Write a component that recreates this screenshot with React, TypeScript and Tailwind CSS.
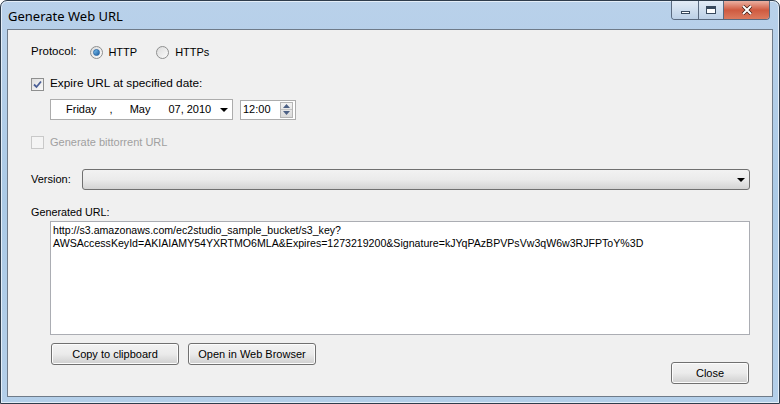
import React from "react";

const font = { fontFamily: '"Liberation Sans", Arial, sans-serif' };

const Radio = ({ checked }: { checked?: boolean }) => (
  <span className="flex h-[13px] w-[13px] items-center justify-center rounded-full border border-[#8e8f8f] bg-gradient-to-br from-[#dcdcdc] to-[#fbfbfb]">
    {checked && <span className="h-[7px] w-[7px] rounded-full bg-gradient-to-br from-[#7cc4f3] to-[#1f5f9f] border border-[#2a6aa9]" />}
  </span>
);

const Check = ({ checked, disabled }: { checked?: boolean; disabled?: boolean }) => (
  <span
    className={`flex h-[13px] w-[13px] items-center justify-center border ${
      disabled ? "border-[#c9c9c9] bg-[#f4f4f4]" : "border-[#8e8f8f] bg-gradient-to-br from-[#dedede] to-[#fafafa]"
    }`}
  >
    {checked && (
      <svg width="9" height="9" viewBox="0 0 9 9">
        <path d="M1 4.5 L3.5 7 L8 1.5" stroke="#4a5f97" strokeWidth="1.8" fill="none" />
      </svg>
    )}
  </span>
);

const Button = ({ label, className }: { label: string; className?: string }) => (
  <div
    className={`flex h-[22px] items-center justify-center rounded-[3px] border border-[#707070] bg-gradient-to-b from-[#f2f2f2] via-[#ebebeb] to-[#cfcfcf] text-[11px] text-black shadow-[inset_0_0_0_1px_#fcfcfc] ${className ?? ""}`}
  >
    {label}
  </div>
);

const DownArrow = () => (
  <svg width="8" height="4" viewBox="0 0 8 4">
    <path d="M0 0 H8 L4 4 Z" fill="#000" />
  </svg>
);

export default function App() {
  return (
    <div className="relative flex h-[404px] w-[780px] flex-col overflow-hidden rounded-t-[7px] border border-[#2f3d4c] bg-gradient-to-b from-[#b9d1ea] via-[#abcae6] to-[#b4cfe9] shadow-[inset_0_0_0_1px_#e4eef8]" style={font}>
      <div className="flex h-[28px] shrink-0 items-start justify-between">
        <span className="mt-[6px] pl-[7px] text-[13px] text-black" style={{ fontFamily: '"Noto Sans", "Open Sans", sans-serif' }}>
          Generate Web URL
        </span>
        <div className="mr-[9px] flex h-[19px] overflow-hidden rounded-b-[4px] border border-t-0 border-[#5a6a7f]">
          <div className="flex w-[27px] items-center justify-center border-r border-[#5a6a7f] bg-gradient-to-b from-[#e3ecf6] to-[#bcd0e6]">
            <span className="mt-[4px] h-[3px] w-[9px] border border-[#38495d] bg-white" />
          </div>
          <div className="flex w-[25px] items-center justify-center border-r border-[#5a6a7f] bg-gradient-to-b from-[#e3ecf6] to-[#bcd0e6]">
            <span className="h-[8px] w-[10px] border border-[#38495d] border-t-[3px] bg-white" />
          </div>
          <div className="flex w-[45px] items-center justify-center bg-gradient-to-b from-[#eab0a2] via-[#cf5a40] to-[#dc7a5e]">
            <svg width="12" height="10" viewBox="0 0 12 10">
              <path d="M2 1 L10 9 M10 1 L2 9" stroke="#3b1a12" strokeWidth="3.4" />
              <path d="M2 1 L10 9 M10 1 L2 9" stroke="#ffffff" strokeWidth="2" />
            </svg>
          </div>
        </div>
      </div>

      <div className="mx-[6px] mb-[6px] flex flex-1 flex-col border border-[#6f7b89] bg-[#f0f0f0] pl-[23px] pr-[22px] text-[11px] text-black">
        <div className="mt-[14px] flex h-[16px] items-center">
          <span className="text-[11.5px]">Protocol:</span>
          <span className="ml-[14px]"><Radio checked /></span>
          <span className="ml-[5px]">HTTP</span>
          <span className="ml-[19px]"><Radio /></span>
          <span className="ml-[6px]">HTTPs</span>
        </div>

        <div className="mt-[16px] flex h-[16px] items-center">
          <Check checked />
          <span className="ml-[6px] text-[11.8px]">Expire URL at specified date:</span>
        </div>

        <div className="ml-[19px] mt-[7px] flex h-[21px] items-center gap-[7px] whitespace-nowrap">
          <div className="flex h-full w-[183px] shrink-0 items-center border border-[#acacac] bg-white">
            <span className="ml-[15px]">Friday</span>
            <span className="ml-[13px]">,</span>
            <span className="ml-[17px]">May</span>
            <span className="ml-[18px]">07, 2010</span>
            <span className="ml-auto mr-[4px] flex items-center"><DownArrow /></span>
          </div>
          <div className="flex h-[20px] w-[56px] shrink-0 items-center justify-between border border-[#acacac] bg-white pl-[2px] pr-[2px]">
            <span>12:00</span>
            <div className="flex h-[16px] w-[13px] flex-col border border-[#b5b5b5] bg-gradient-to-b from-[#f3f3f3] to-[#dadada]">
              <div className="flex flex-1 items-center justify-center border-b border-[#c4c4c4]">
                <svg width="7" height="4" viewBox="0 0 7 4"><path d="M0 4 L3.5 0 L7 4 Z" fill="#4d6185" /></svg>
              </div>
              <div className="flex flex-1 items-center justify-center">
                <svg width="7" height="4" viewBox="0 0 7 4"><path d="M0 0 L3.5 4 L7 0 Z" fill="#4d6185" /></svg>
              </div>
            </div>
          </div>
        </div>

        <div className="mt-[14px] flex h-[16px] items-center">
          <Check disabled />
          <span className="ml-[6px] text-[#a0a0a0]">Generate bittorrent URL</span>
        </div>

        <div className="mt-[19px] flex h-[21px] items-center">
          <span className="w-[51px]">Version:</span>
          <div className="flex h-full flex-1 items-center justify-end rounded-[3px] border border-[#707070] bg-gradient-to-b from-[#f2f2f2] via-[#ebebeb] to-[#d3d3d3] pr-[4px]">
            <DownArrow />
          </div>
        </div>

        <div className="mt-[14px] flex h-[16px] items-center">
          <span className="text-[10.8px]">Generated URL:</span>
        </div>

        <div className="ml-[19px] mt-[1px] h-[114px] border border-[#abadb3] bg-white px-[2px] pt-[2px] text-[10.6px] leading-[13px]">
          <div>http://s3.amazonaws.com/ec2studio_sample_bucket/s3_key?</div>
          <div>AWSAccessKeyId=AKIAIAMY54YXRTMO6MLA&amp;Expires=1273219200&amp;Signature=kJYqPAzBPVPsVw3qW6w3RJFPToY%3D</div>
        </div>

        <div className="flex items-start justify-between">
          <div className="ml-[20px] mt-[8px] flex gap-[9px]">
            <Button label="Copy to clipboard" className="w-[128px]" />
            <Button label="Open in Web Browser" className="w-[128px]" />
          </div>
          <Button label="Close" className="mr-[1px] mt-[27px] w-[78px]" />
        </div>
      </div>
    </div>
  );
}
